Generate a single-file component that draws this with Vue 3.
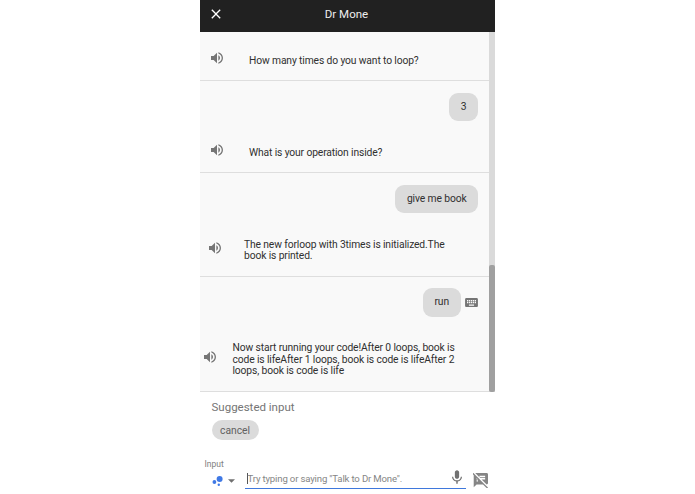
<script setup>
const turns = [
  { id: 1, size: 'short', reply: 'How many times do you want to loop?' },
  { id: 2, size: 'short', query: '3', reply: 'What is your operation inside?' },
  {
    id: 3,
    size: 'medium',
    query: 'give me book',
    reply: 'The new forloop with 3times is initialized.The\nbook is printed.',
  },
  {
    id: 4,
    size: 'long',
    query: 'run',
    typed: true,
    reply:
      'Now start running your code!After 0 loops, book is\ncode is lifeAfter 1 loops, book is code is lifeAfter 2\nloops, book is code is life',
  },
]
</script>

<template>
  <div class="phone">
    <header class="bar">
      <svg class="close" viewBox="0 0 24 24">
        <path d="M19 6.41 17.59 5 12 10.59 6.41 5 5 6.41 10.59 12 5 17.59 6.41 19 12 13.41 17.59 19 19 17.59 13.41 12z" />
      </svg>
      <h1 class="title">Dr Mone</h1>
    </header>

    <main class="chat">
      <div class="turns">
        <section v-for="turn in turns" :key="turn.id" class="turn" :class="turn.size">
          <div v-if="turn.query" class="query">
            <span class="bubble">{{ turn.query }}</span>
            <svg v-if="turn.typed" class="keyboard" viewBox="2 5 20 14">
              <path d="M20 5H4c-1.1 0-1.99.9-1.99 2L2 17c0 1.1.9 2 2 2h16c1.1 0 2-.9 2-2V7c0-1.1-.9-2-2-2zm-9 3h2v2h-2V8zm0 3h2v2h-2v-2zM8 8h2v2H8V8zm0 3h2v2H8v-2zm-1 2H5v-2h2v2zm0-3H5V8h2v2zm9 7H8v-2h8v2zm0-4h-2v-2h2v2zm0-3h-2V8h2v2zm3 3h-2v-2h2v2zm0-3h-2V8h2v2z" />
            </svg>
          </div>
          <div class="reply">
            <svg class="speaker" viewBox="3 3 18 18">
              <path d="M3 9v6h4l5 5V4L7 9H3zm13.5 3c0-1.77-1.02-3.29-2.5-4.03v8.05c1.48-.73 2.5-2.25 2.5-4.02zM14 3.23v2.06c2.89.86 5 3.54 5 6.71s-2.11 5.85-5 6.71v2.06c4.01-.91 7-4.49 7-8.77s-2.99-7.86-7-8.77z" />
            </svg>
            <p class="text">{{ turn.reply }}</p>
          </div>
        </section>
      </div>
      <div class="track"><div class="thumb"></div></div>
    </main>

    <section class="suggestions">
      <h2 class="heading">Suggested input</h2>
      <button class="chip">cancel</button>
    </section>

    <footer class="composer">
      <div class="source">
        <span class="label">Input</span>
        <div class="picker">
          <svg class="assistant" viewBox="0 0 12 12">
            <circle cx="7.6" cy="4" r="3" />
            <circle cx="2.4" cy="7" r="1.9" />
            <circle cx="6.8" cy="9.8" r="1.2" />
          </svg>
          <svg class="caret" viewBox="0 0 8 4"><path d="M0 0h8L4 4z" /></svg>
        </div>
      </div>
      <div class="field">
        <span class="cursor"></span>
        <span class="hint">Try typing or saying "Talk to Dr Mone".</span>
        <svg class="mic" viewBox="5 2 14 19">
          <path d="M12 14c1.66 0 2.99-1.34 2.99-3L15 5c0-1.66-1.34-3-3-3S9 3.34 9 5v6c0 1.66 1.34 3 3 3zm5.3-3c0 3-2.54 5.1-5.3 5.1S6.7 14 6.7 11H5c0 3.41 2.72 6.23 6 6.72V21h2v-3.28c3.28-.48 6-3.3 6-6.72h-1.7z" />
        </svg>
      </div>
      <svg class="mute" viewBox="1 2 21 21">
        <path d="M10.54 11 10 10.46 7.54 8 6 6.46 2.38 2.84 1.27 1.73 0 3l2.01 2.01L2 22l4-4h9l5.73 5.73L22 22.46 17.54 18l-7-7zM8 14H6v-2h2v2zm-2-3V9l2 2H6zm14-9H4.08L10 7.92V6h8v2h-7.92l1 1H18v2h-4.92l6.99 6.99C21.14 17.95 22 17.08 22 16V4c0-1.1-.9-2-2-2z" />
      </svg>
    </footer>
  </div>
</template>

<style>
body {
  background: #fff;
}
</style>

<style scoped>
.phone {
  width: 295px;
  height: 494px;
  margin-left: 200px;
  display: flex;
  flex-direction: column;
  overflow: hidden;
  background: #fff;
  color: #303030;
  font-family: Roboto, 'Liberation Sans', sans-serif;
}

svg {
  display: block;
  flex: none;
}

.bar {
  height: 32px;
  flex: none;
  display: flex;
  align-items: center;
  padding: 0 8px;
  box-sizing: border-box;
  background: #212121;
  color: #eee;
}

.close {
  width: 16px;
  height: 16px;
  margin-top: -4px;
  fill: #fff;
}

.title {
  flex: 1;
  margin: -4px 18px 0 0;
  text-align: center;
  font-size: 11.5px;
  font-weight: 400;
}

.chat {
  height: 359.5px;
  flex: none;
  display: flex;
  background: #f9f9f9;
}

.turns {
  flex: 1;
}

.turn {
  box-sizing: border-box;
  padding-top: 11.5px;
  border-bottom: 1px solid #dedede;
}

.turn:first-child {
  padding-top: 22.5px;
}

.query {
  display: flex;
  justify-content: flex-end;
  align-items: center;
  gap: 4px;
  padding-right: 11px;
  margin-bottom: 25.5px;
}

.bubble {
  padding: 0 11.5px;
  border-radius: 9px;
  background: #dbdbdb;
  font-size: 10.3px;
  line-height: 28.5px;
  letter-spacing: -0.12px;
}

.keyboard {
  width: 13px;
  height: 9px;
  margin-right: 0.5px;
  fill: #757575;
}

.reply {
  display: flex;
  align-items: center;
  padding-bottom: 14px;
}

.speaker {
  width: 12px;
  height: 12px;
  margin: -4.5px 0 -0.5px;
  fill: #757575;
}

.text {
  margin: 0;
  font-size: 10.3px;
  line-height: 11.5px;
  letter-spacing: -0.13px;
  white-space: pre;
}

.short .reply {
  padding-left: 11px;
  gap: 26px;
}

.medium .reply {
  padding-left: 9px;
  gap: 23px;
}

.long .reply {
  padding-left: 4px;
  gap: 16.5px;
}

.track {
  width: 6px;
  display: flex;
  flex-direction: column;
  justify-content: flex-end;
  background: #dadada;
}

.thumb {
  height: 127px;
  border-radius: 2px;
  background: #a0a0a0;
}

.suggestions {
  padding: 9.5px 0 0 11.5px;
}

.heading {
  margin: 0 0 5.5px;
  color: #757575;
  font-size: 11.5px;
  font-weight: 400;
  line-height: 13.5px;
}

.chip {
  display: block;
  height: 20px;
  padding: 0 8.5px;
  border: 0;
  border-radius: 10px;
  background: #dbdbdb;
  color: #606060;
  font: inherit;
  font-size: 10.3px;
}

.composer {
  flex: 1;
  display: flex;
  align-items: flex-end;
  padding: 0 7px 5px 4.5px;
}

.source {
  width: 40.5px;
  padding-bottom: 2.5px;
}

.label {
  display: block;
  margin-bottom: 6px;
  color: #808080;
  font-size: 8.5px;
  line-height: 10px;
}

.picker {
  display: flex;
  align-items: center;
  gap: 4px;
  padding-left: 7px;
}

.assistant {
  width: 12px;
  height: 12px;
  fill: #4079e5;
}

.caret {
  width: 7px;
  height: 4px;
  fill: #707070;
}

.field {
  width: 221px;
  height: 20px;
  box-sizing: border-box;
  display: flex;
  align-items: center;
  padding: 0 4px 1px 1.5px;
  border-bottom: 1.5px solid #3f78dc;
}

.cursor {
  width: 1px;
  height: 11px;
  background: #555;
}

.hint {
  flex: 1;
  color: #858585;
  font-size: 9.6px;
  letter-spacing: -0.16px;
  white-space: nowrap;
}

.mic {
  width: 10px;
  height: 14px;
  margin-bottom: 3px;
  fill: #707070;
}

.mute {
  width: 15px;
  height: 15px;
  margin-left: 7px;
  margin-bottom: 1px;
  fill: #858585;
}
</style>
